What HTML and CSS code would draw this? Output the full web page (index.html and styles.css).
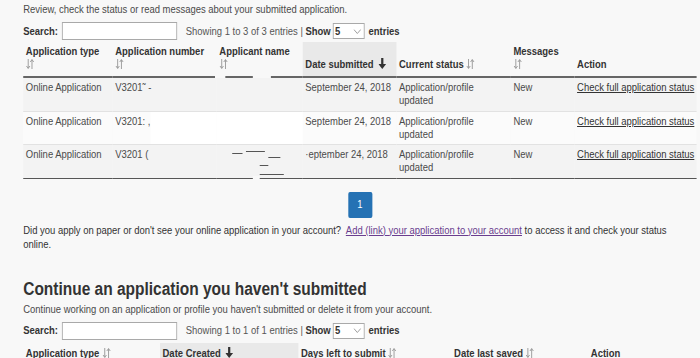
FILE: index.html
```html
<!DOCTYPE html>
<html lang="en">
<head>
<meta charset="utf-8">
<title>Applications</title>
<link rel="stylesheet" href="styles.css">
</head>
<body>
<div class="frame">
<main class="page">
  <p class="intro">Review, check the status or read messages about your submitted application.</p>

  <div class="toolbar">
    <label class="search-label">Search:</label>
    <input class="search-input" type="text">
    <span class="info">Showing 1 to 3 of 3 entries <span class="sep">|</span> <b>Show</b></span>
    <span class="select"><span>5</span><svg class="chev" width="9" height="5" viewBox="0 0 9 5"><path d="M0.5 0.5l4 4 4-4" stroke="#999" fill="none"/></svg></span>
    <b class="entries">entries</b>
  </div>

  <table class="grid grid-submitted">
    <colgroup>
      <col class="c1"><col class="c2"><col class="c3"><col class="c4"><col class="c5"><col class="c6"><col>
    </colgroup>
    <thead>
      <tr>
        <th>Application type<br><svg class="sort" width="10" height="10" viewBox="0 0 10 10"><path d="M2.8 0v9.3M0.8 7l2 2.4 2-2.4M7.2 10V0.7M5.2 3l2-2.4 2 2.4" stroke="#999" fill="none"/></svg></th>
        <th>Application number<br><svg class="sort" width="10" height="10" viewBox="0 0 10 10"><path d="M2.8 0v9.3M0.8 7l2 2.4 2-2.4M7.2 10V0.7M5.2 3l2-2.4 2 2.4" stroke="#999" fill="none"/></svg></th>
        <th class="redacted-head">Applicant name<br><svg class="sort" width="10" height="10" viewBox="0 0 10 10"><path d="M2.8 0v9.3M0.8 7l2 2.4 2-2.4M7.2 10V0.7M5.2 3l2-2.4 2 2.4" stroke="#999" fill="none"/></svg><span class="gap gap-a"></span><span class="gap gap-b"></span></th>
        <th class="sorted">Date submitted <svg class="sort-down" width="9" height="11" viewBox="0 0 9 11"><path d="M3.2 0h2.6v6H9l-4.5 5L0 6h3.2z" fill="#333"/></svg></th>
        <th>Current status <svg class="sort" width="10" height="10" viewBox="0 0 10 10"><path d="M2.8 0v9.3M0.8 7l2 2.4 2-2.4M7.2 10V0.7M5.2 3l2-2.4 2 2.4" stroke="#999" fill="none"/></svg></th>
        <th>Messages<br><svg class="sort" width="10" height="10" viewBox="0 0 10 10"><path d="M2.8 0v9.3M0.8 7l2 2.4 2-2.4M7.2 10V0.7M5.2 3l2-2.4 2 2.4" stroke="#999" fill="none"/></svg></th>
        <th>Action</th>
      </tr>
    </thead>
    <tbody>
      <tr class="odd">
        <td>Online Application</td>
        <td>V3201˜ -</td>
        <td></td>
        <td class="nowrap">September 24, 2018</td>
        <td>Application/profile updated</td>
        <td>New</td>
        <td class="nowrap"><a class="link" href="#">Check full application status</a></td>
      </tr>
      <tr class="even">
        <td>Online Application</td>
        <td class="patch-start">V3201: ,<span class="patch patch-num"></span></td>
        <td class="patch-cell"></td>
        <td class="nowrap">September 24, 2018</td>
        <td>Application/profile updated</td>
        <td>New</td>
        <td class="nowrap"><a class="link" href="#">Check full application status</a></td>
      </tr>
      <tr class="odd">
        <td>Online Application</td>
        <td>V3201 (</td>
        <td class="scribble-cell"><span class="scribble s1"></span><span class="scribble s2"></span><span class="scribble s3"></span><span class="scribble s4"></span><span class="scribble s5"></span><span class="gap gap-c"></span></td>
        <td class="nowrap">·eptember 24, 2018</td>
        <td>Application/profile updated</td>
        <td>New</td>
        <td class="nowrap"><a class="link" href="#">Check full application status</a></td>
      </tr>
    </tbody>
  </table>

  <div class="pager">
    <span class="page-btn">1</span>
  </div>

  <p class="note">Did you apply on paper or don't see your online application in your account?&nbsp; <a class="visited" href="#">Add (link) your application to your account</a> to access it and check your status online.</p>

  <h2 class="title">Continue an application you haven't submitted</h2>
  <p class="sub">Continue working on an application or profile you haven't submitted or delete it from your account.</p>

  <div class="toolbar toolbar-2">
    <label class="search-label">Search:</label>
    <input class="search-input" type="text">
    <span class="info">Showing 1 to 1 of 1 entries <span class="sep">|</span> <b>Show</b></span>
    <span class="select"><span>5</span><svg class="chev" width="9" height="5" viewBox="0 0 9 5"><path d="M0.5 0.5l4 4 4-4" stroke="#999" fill="none"/></svg></span>
    <b class="entries">entries</b>
  </div>

  <table class="grid grid-draft">
    <colgroup>
      <col class="d1"><col class="d2"><col class="d3"><col class="d4"><col>
    </colgroup>
    <thead>
      <tr>
        <th>Application type <svg class="sort" width="10" height="10" viewBox="0 0 10 10"><path d="M2.8 0v9.3M0.8 7l2 2.4 2-2.4M7.2 10V0.7M5.2 3l2-2.4 2 2.4" stroke="#999" fill="none"/></svg></th>
        <th class="sorted">Date Created <svg class="sort-down" width="9" height="11" viewBox="0 0 9 11"><path d="M3.2 0h2.6v6H9l-4.5 5L0 6h3.2z" fill="#333"/></svg></th>
        <th>Days left to submit <svg class="sort" width="10" height="10" viewBox="0 0 10 10"><path d="M2.8 0v9.3M0.8 7l2 2.4 2-2.4M7.2 10V0.7M5.2 3l2-2.4 2 2.4" stroke="#999" fill="none"/></svg></th>
        <th>Date last saved <svg class="sort" width="10" height="10" viewBox="0 0 10 10"><path d="M2.8 0v9.3M0.8 7l2 2.4 2-2.4M7.2 10V0.7M5.2 3l2-2.4 2 2.4" stroke="#999" fill="none"/></svg></th>
        <th>Action</th>
      </tr>
    </thead>
  </table>
</main>
</div>
</body>
</html>
```
FILE: styles.css
```css
html, body {
  margin: 0;
  padding: 0;
  background: #f8f8f8;
  overflow: hidden;
}
body {
  font-family: "Liberation Sans", Arial, Helvetica, sans-serif;
  font-size: 11px;
  line-height: 13px;
  color: #4a4a4a;
}
.frame {
  width: 700px;
  height: 358px;
  overflow: hidden;
}
/* the page is laid out at its native width and shown narrowed, as in the capture */
.page {
  width: 814px;
  box-sizing: border-box;
  padding: 2px 4px 0 27px;
  transform: scaleX(0.86);
  transform-origin: 0 0;
}
.intro {
  margin: 0;
  line-height: 14px;
  color: #4a4a4a;
}
.toolbar {
  display: flex;
  align-items: center;
  height: 18px;
  margin-top: 6px;
}
.search-label {
  font-weight: bold;
  color: #333;
  width: 45px;
}
.search-input {
  width: 134px;
  height: 18px;
  box-sizing: border-box;
  border: 1px solid #a9a9a9;
  background: #fff;
  margin: 0 10px 0 0;
  padding: 0;
}
.info {
  color: #555;
  white-space: nowrap;
}
.info b {
  color: #333;
}
.sep {
  color: #555;
}
.select {
  display: inline-flex;
  align-items: center;
  justify-content: space-between;
  width: 37px;
  height: 16px;
  box-sizing: border-box;
  border: 1px solid #a9a9a9;
  background: #fff;
  margin-left: 2px;
  padding: 0 3px 0 2px;
  font-weight: bold;
  color: #333;
}
.entries {
  margin-left: 5px;
  color: #333;
}
.grid {
  width: 783px;
  border-collapse: collapse;
  table-layout: fixed;
}
.grid-submitted {
  margin-top: 2px;
}
.c1 { width: 104px; }
.c2 { width: 121px; }
.c3 { width: 100px; }
.c4 { width: 109px; }
.c5 { width: 133px; }
.c6 { width: 74px; }
.d1 { width: 159px; }
.d2 { width: 161px; }
.d3 { width: 178px; }
.d4 { width: 159px; }
th {
  text-align: left;
  vertical-align: bottom;
  font-weight: bold;
  color: #333;
  padding: 2px 3px 5px;
  line-height: 13px;
  white-space: nowrap;
}
.grid-submitted thead tr {
  height: 35px;
  border-bottom: 2px solid #666;
}
th.sorted {
  background: #e9e9e9;
}
.sort {
  vertical-align: -1px;
}
.sort-down {
  vertical-align: -1px;
  margin-left: 2px;
}
td {
  vertical-align: top;
  padding: 3px 3px 3.5px;
  line-height: 13px;
  color: #4a4a4a;
}
tbody tr {
  border-bottom: 1px solid #e2e2e2;
}
tbody tr:last-child {
  border-bottom: 1px solid #555;
}
tr.odd {
  background: #f3f3f3;
}
tr.even {
  background: #fbfbfb;
}
.nowrap {
  white-space: nowrap;
}
.link {
  color: #333;
  text-decoration: underline;
}
.visited {
  color: #6a3d8f;
  text-decoration: underline;
}
.redacted-head, .patch-start, .patch-cell, .scribble-cell {
  position: relative;
}
.gap {
  position: absolute;
  height: 3px;
  background: #f8f8f8;
}
.gap-a { left: -2px; width: 12px; bottom: -2px; }
.gap-b { left: 42px; width: 21px; bottom: -2px; }
.gap-c { left: 42px; width: 8px; bottom: -1px; }
.patch {
  position: absolute;
  background: #fff;
}
.patch-num {
  left: 44px;
  right: 0;
  top: 0;
  bottom: 0;
}
.patch-cell {
  background: #fff;
}
.scribble {
  position: absolute;
  height: 1px;
  background: #555;
}
.s1 { left: 18px; top: 8px; width: 12px; }
.s2 { left: 34px; top: 6px; width: 22px; }
.s3 { left: 60px; top: 12px; width: 14px; }
.s4 { left: 50px; top: 20px; width: 10px; }
.s5 { left: 50px; top: 29px; width: 28px; }
.pager {
  display: flex;
  justify-content: center;
  padding-top: 13px;
}
.page-btn {
  display: flex;
  align-items: center;
  justify-content: center;
  width: 28px;
  height: 26px;
  background: #2572b4;
  color: #fff;
  border-radius: 2px;
  font-size: 11px;
}
.note {
  margin: 5px 0 0;
  line-height: 14px;
  color: #333;
}
.title {
  margin: 27px 0 0;
  font-size: 18px;
  line-height: 22px;
  font-weight: bold;
  color: #333;
}
.sub {
  margin: 2px 0 0;
  line-height: 14px;
  color: #4a4a4a;
}
.toolbar-2 {
  margin-top: 6px;
}
.grid-draft {
  margin-top: 3px;
}
.grid-draft th {
  padding: 4px 3px 5px;
}
```
